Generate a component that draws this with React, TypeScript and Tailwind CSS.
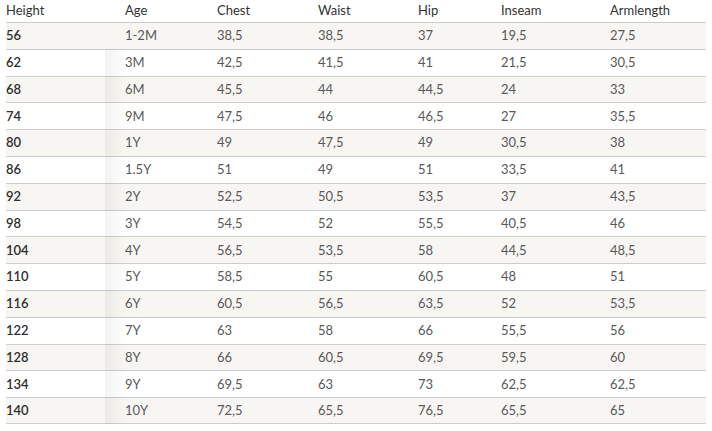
const headers = ['Height', 'Age', 'Chest', 'Waist', 'Hip', 'Inseam', 'Armlength'];

const rows: string[][] = [
  ['56', '1-2M', '38,5', '38,5', '37', '19,5', '27,5'],
  ['62', '3M', '42,5', '41,5', '41', '21,5', '30,5'],
  ['68', '6M', '45,5', '44', '44,5', '24', '33'],
  ['74', '9M', '47,5', '46', '46,5', '27', '35,5'],
  ['80', '1Y', '49', '47,5', '49', '30,5', '38'],
  ['86', '1.5Y', '51', '49', '51', '33,5', '41'],
  ['92', '2Y', '52,5', '50,5', '53,5', '37', '43,5'],
  ['98', '3Y', '54,5', '52', '55,5', '40,5', '46'],
  ['104', '4Y', '56,5', '53,5', '58', '44,5', '48,5'],
  ['110', '5Y', '58,5', '55', '60,5', '48', '51'],
  ['116', '6Y', '60,5', '56,5', '63,5', '52', '53,5'],
  ['122', '7Y', '63', '58', '66', '55,5', '56'],
  ['128', '8Y', '66', '60,5', '69,5', '59,5', '60'],
  ['134', '9Y', '69,5', '63', '73', '62,5', '62,5'],
  ['140', '10Y', '72,5', '65,5', '76,5', '65,5', '65'],
];

const colWidths = ['w-[119px]', 'w-[92px]', 'w-[101px]', 'w-[100px]', 'w-[83px]', 'w-[109px]', 'flex-1'];

export default function App() {
  return (
    <div className="bg-white w-[712px] h-[431px] pl-[6px] pr-[6px] font-['Lato',sans-serif] text-[13px]">
      <div className="relative">
        <div className="flex h-[22px] items-center text-[#333]">
          {headers.map((h, i) => (
            <div key={h} className={colWidths[i]}>
              {h}
            </div>
          ))}
        </div>
        {rows.map((row, r) => (
          <div
            key={row[0]}
            className={`flex h-[26.8px] items-center border-t border-[#cdcdcd] ${
              r % 2 === 0 ? 'bg-[#f7f6f2]' : 'bg-white'
            } ${r === rows.length - 1 ? 'border-b' : ''}`}
          >
            {row.map((cell, i) => (
              <div
                key={i}
                className={`${colWidths[i]} ${i === 0 ? 'font-semibold text-[#2e2e2e]' : 'text-[#595959]'}`}
              >
                {cell}
              </div>
            ))}
          </div>
        ))}
        <div className="absolute left-[99px] top-[49px] bottom-0 w-[20px] bg-gradient-to-r from-black/[0.05] to-transparent pointer-events-none" />
      </div>
    </div>
  );
}
